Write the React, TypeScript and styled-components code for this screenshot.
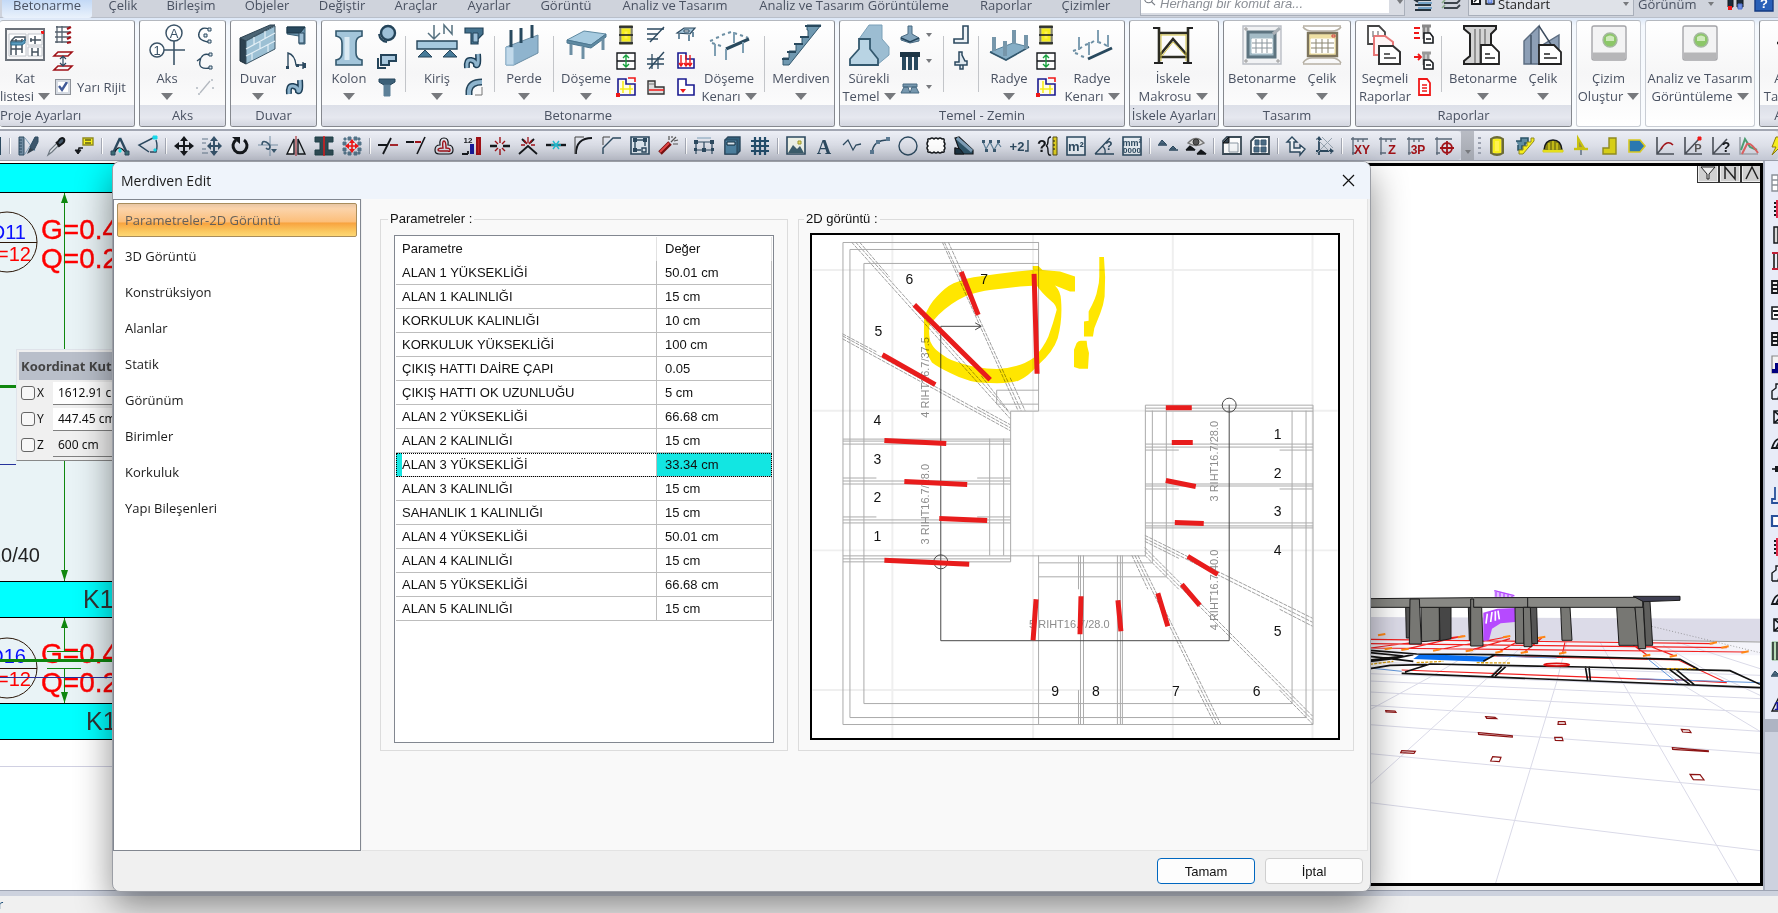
import React from 'react';
import styled, { createGlobalStyle } from 'styled-components';

const UI = '"Open Sans", "Noto Sans", sans-serif';
const SANS = '"Liberation Sans", Arial, sans-serif';

const Global = createGlobalStyle`
  *, *::before, *::after { box-sizing: border-box; }
  html, body { margin: 0; height: 100%; overflow: hidden; }
  body { font-family: ${UI}; font-size: 13px; color: #4a5262; }
  button, input, select { font: inherit; color: inherit; }
`;

/* ---------- icons ---------- */

type Label = { t: string; x: number; y: number; z: number; c?: string; serif?: boolean };
type Stroke = [d: string, stroke?: string, width?: number, fill?: string];
type Shape = Stroke | Label;

const INK = '#2d4a60';
const STEEL = '#7f9fb8';
const RED = '#a01218';
const HOT = '#f01818';
const YEL = '#f6ee1c';
const BLK = '#15181c';
const BLUE = '#1b1b90';

const glyphs: Record<string, Shape[]> = {
  frame: [['M2 2H18V18H2Z', INK, 2, 'none']],
  scalePen: [['M1 1V19H6V1ZM1 4H4M1 7H4M1 10H4M1 13H4M1 16H4', INK, 1, '#6f8aa0'], ['M7 2L17 15M7 18L17 2', STEEL, 1], ['M9 18L12 11L16 14Z', BLK, 0, '#33424e'], ['M12 11L17 1H20V6L16 14Z', INK, 1, '#3d566c']],
  dropper: [['M2 19L4 14L11 7L13 9L6 16Z', '#6d7780', 1.2, '#dfe3e8'], ['M10 6L14 10M11 7L14 3Q17 1 18 3T17 7L13 10Z', BLK, 2, '#44586a']],
  callout: [['M9 2H19V9H9Z', '#8f8a20', 1.4, YEL], ['M11 4H17M11 7H17', BLK, 1], ['M9 12H5L4 16', BLK, 1.4], ['M1 14H7L4 18Z', BLK, 1, BLK]],
  compass: [['M10 2L3 17M10 2L17 17', INK, 2.4], ['M5 16Q7 11 10 12T15 16', BLK, 1.2], ['M9 13H11V16H9Z', '#17e3ea', 1, '#17e3ea'], ['M1 15H5V19H1ZM15 15H19V19H15Z', INK, 1, '#3c6f77']],
  poly: [['M15 2L1 9L11 16', INK, 1.5], ['M18 4Q20 10 18 16H12', INK, 1.4], ['M15 0H19V3H15ZM16 13H18V15H16Z', '#17d8ea', 1, '#17d8ea']],
  move: [['M10 2V18M2 10H18', BLK, 2], ['M10 0L6 5H14ZM10 20L6 15H14ZM0 10L5 6V14ZM20 10L15 6V14Z', BLK, 0, BLK]],
  moveCopy: [['M12 3V17M6 10H19', '#36536b', 2], ['M12 0L8 5H16ZM12 20L8 15H16ZM20 10L16 6V14ZM5 10L9 6V14Z', '#36536b', 0, '#36536b'], ['M0 3H6M0 7H4M0 13H4M0 17H6', '#64798c', 1.2]],
  rotate: [['M6 4A7 7 0 1 0 14 4', BLK, 3], ['M2 1H10V8Z', BLK, 0, BLK]],
  swirl: [['M0 9H20M12 0V20', '#7891a6', 1], ['M4 9Q4 4 8 6T12 11Q11 15 8 12', '#3a586e', 1.6], ['M13 13H19L16 17Z', '#3a586e', 0, '#3a586e']],
  mirror: [['M8 3L1 18H8Z', BLK, 1.4, '#fff'], ['M12 3L19 18H12Z', BLK, 1.4, '#cfd8df'], ['M10 0V20', RED, 1]],
  ibeam: [['M1 1H19V6H14V14H19V19H1V14H6V6H1Z', '#204048', 1, '#2f4c55'], ['M10 0V20', HOT, 1.4]],
  explode: [['M6 1H9V4H6ZM12 1H15V4H12ZM1 6H4V9H1ZM16 6H19V9H16ZM1 12H4V15H1ZM16 12H19V15H16ZM6 16H9V19H6ZM12 16H15V19H12ZM2 2H4V4H2ZM16 16H18V18H16ZM16 2H18V4H16ZM2 16H4V18H2Z', '#54748a', 1, '#54748a'], ['M10 4V16M4 10H16', HOT, 1.6], ['M10 3L7 7H13ZM10 17L7 13H13ZM3 10L7 7V13ZM17 10L13 7V13Z', HOT, 0, HOT]],
  trim: [['M0 9H10M13 2L5 18', BLK, 1.8], ['M12 9H20', RED, 1.8]],
  extend: [['M0 6H8', BLK, 2], ['M9 6H15', RED, 2], ['M19 1L11 18', BLK, 1.6]],
  offset: [['M1 14Q1 9 6 9Q5 2 10 2T14 9Q19 9 19 14Q19 18 15 18H5Q1 18 1 14Z', BLK, 1.2], ['M4 14Q4 12 9 12Q8 5 10 5T12 12Q16 12 16 14T14 15H6Q4 15 4 14Z', RED, 1.4]],
  bars: [{ t: '12', x: 6, y: 7, z: 8, c: BLK }, ['M0 18H6M6 15V18', BLK, 1.8], ['M8 8H12V18H8Z', '#1a1a9a', 0, '#1a1a9a'], ['M15 2H18V18H15Z', RED, 2, '#c62626']],
  brk: [['M0 10H7M13 10H20', BLK, 2.4], ['M10 1V7M10 13V19M5 5L8 8M15 5L12 8M5 15L8 12M15 15L12 12', RED, 1.4]],
  xbrk: [['M1 18L10 10L19 18M4 3L8 7M16 3L12 7', BLK, 1.8], ['M10 1V7M3 9H7M17 9H13M6 4L9 8M14 4L11 8', RED, 1.3]],
  join: [['M0 9H20', BLK, 2.4], ['M7 5L13 13M13 5L7 13M5 9H15', '#22bcd0', 1.4]],
  fillet: [['M2 18Q2 2 18 2', BLK, 1.8], ['M1 18V1H10', '#444', 1]],
  chamfer: [['M1 18V12L11 2H19', INK, 1.4], ['M1 9V1H8', '#444', 1]],
  scaleRect: [['M1 1H19V18H1Z', INK, 1.6, '#dce6ee'], ['M5 4H15M5 4V14M15 4V10M5 14H11', INK, 1.4], ['M12 12H16V16H12Z', INK, 1.4], ['M3 2H7V6H3ZM13 2H17V6H13ZM3 12H7V16H3Z', INK, 0, INK]],
  wand: [['M2 17L12 7', '#7a1010', 5], ['M2 16L11 7', '#e84848', 2], ['M13 6L18 1M11 4L11 0M15 8H20M14 2L14 0M16 5L20 4', '#555', 1.2]],
  nodes: [['M2 6H18M2 6V18M10 6V14M18 6V18M2 14H18', INK, 1.2], ['M0 4H4V8H0ZM16 4H20V8H16ZM8 12H12V16H8ZM0 12H3V15H0ZM17 12H20V15H17Z', INK, 0, INK], ['M3 2H17', STEEL, 1]],
  book: [['M3 4L6 1H18V15L15 18H3Z', INK, 1.4, '#33617c'], ['M3 4H15V18H3Z', INK, 1.2, '#4f83a2'], ['M5 6H13V9H5Z', '#0f2b3c', 1, '#dfeaf2']],
  grid: [['M5 1V19M10 1V19M15 1V19M1 5H19M1 10H19M1 15H19', '#234d6b', 2.2]],
  image: [['M1 1H19V18H1Z', INK, 1.6, '#eef2e8'], ['M2 17L7 9L11 13L14 10L18 17Z', INK, 0, '#3e5f6e'], ['M12 5h3v3h-3Z', '#a09a30', 1, '#e8e070']],
  textA: [{ t: 'A', x: 10, y: 18, z: 20, c: INK, serif: true }],
  zigzag: [['M1 9L6 4L11 14L14 9L19 8', INK, 1.3]],
  arc: [['M2 17Q3 4 18 4', INK, 1.4], ['M0 14H4V18H0ZM6 4H10V8H6ZM16 1H20V5H16Z', INK, 0, '#5c7b94']],
  circle: [['M10 10m-9 0a9 9 0 1 0 18 0a9 9 0 1 0 -18 0', INK, 1.4]],
  cloud: [['M2 5Q1 2 4 3Q6 1 8 3Q10 1 12 3Q14 1 16 3Q19 2 18 6Q20 8 18 10Q20 12 18 14Q19 17 16 16Q14 18 12 16Q10 18 8 16Q6 18 4 16Q1 17 2 14Q0 12 2 10Q0 8 2 5Z', BLK, 1.5, '#fff']],
  tri: [['M1 2L5 1L19 14V18H1V12L5 13Z', BLK, 1.2, '#2f5468'], ['M3 2L18 15', STEEL, 3], ['M1 12V18H10L6 13Z', BLK, 1, '#1d3442']],
  wave: [['M1 6L4 13L8 6L12 14L16 7L19 11', '#5f8199', 1.2], ['M0 4H3V7H0ZM7 4H10V7H7ZM15 4H18V7H15ZM3 13H6V16H3ZM11 13H14V16H11Z', INK, 0, '#3c5b72']],
  plus21: [{ t: '+2', x: 7, y: 15, z: 13, c: INK }, ['M15 15H18V4', INK, 1.4]],
  qscale: [{ t: '?', x: 4, y: 16, z: 16, c: BLK }, ['M13 1Q10 1 10 5T8 10Q10 10 10 15T13 19', BLK, 1.4], ['M15 1H19V19H15Z', '#56501a', 1, '#e0d020'], ['M15 5H17M15 9H17M15 13H17', BLK, 1]],
  m2: [['M1 1H19V19H1Z', INK, 1.6, '#e7edf3'], { t: 'm²', x: 10, y: 15, z: 13, c: INK }],
  angle: [['M1 18L16 2M1 18H20M8 10Q12 12 11 18', INK, 1.3], { t: '?', x: 15, y: 14, z: 12, c: INK }],
  mm2: [['M1 1H19V19H1Z', INK, 1.6, '#e7edf3'], { t: 'mm²', x: 10, y: 10, z: 9, c: INK }, { t: '0000', x: 10, y: 17, z: 8, c: INK }],
  levels: [['M0 9H9M11 14H20', INK, 1.6], ['M4 4L1 8H8ZM12 13H18L15 10Z', INK, 1, '#4d6a80']],
  eye: [['M2 7Q10 -2 18 7Q10 12 2 7Z', '#777', 1.4, '#ddd'], ['M10 6m-3 0a3 3 0 1 0 6 0a3 3 0 1 0 -6 0', '#333', 1, '#555'], ['M0 14H9M11 18H20M4 10L1 13H8ZM15 14L12 17H19Z', BLK, 1.3, BLK]],
  corner: [['M1 5L5 1H19V18H1Z', '#3c4c58', 1.8, '#fff'], ['M1 7L7 1V7Z', '#111', 1, '#33424e'], ['M7 7H16V16H7Z', '#8d99a4', 1, '#f7f9fb']],
  panels: [['M1 5L5 1H19V18H1Z', '#3c4c58', 1.8, '#fff'], ['M5 4H9V9H5ZM11 4H16V9H11ZM4 11H9V16H4ZM11 11H16V16H11Z', '#3c5b72', 1, '#4b6d86']],
  turn: [['M6 1L1 6H4V16H14V19L19 13L14 9V12H8V6H11Z', INK, 1.4, '#f2f5f8']],
  hatch: [['M5 19V2M2 15H18', INK, 1.8], ['M5 0L2 4H8ZM20 15L16 12V18Z', INK, 0, INK], ['M2 2L18 18M18 2L2 18M8 1L19 12', '#9aa6b2', 1]],
  xy: [['M1 3H18M3 1V19M2 17H5M8 3V6M13 3V6', '#5a6878', 1.3], { t: 'XY', x: 12, y: 18, z: 12, c: RED }],
  z: [['M1 3H18M3 1V19M2 17H8M8 3V6M13 3V6', '#5a6878', 1.3], { t: 'Z', x: 14, y: 18, z: 13, c: RED }],
  p3: [['M1 3H18M3 1V19M2 17H5M8 3V6M13 3V6', '#5a6878', 1.3], { t: '3P', x: 12, y: 18, z: 12, c: RED }],
  target: [['M1 3H18M3 1V19M2 17H6', '#5a6878', 1.3], ['M13 12m-5 0a5 5 0 1 0 10 0a5 5 0 1 0 -10 0M13 5V19M6 12H20', RED, 1.8]],
  ycol: [['M4 3Q10 -1 16 3V17Q10 21 4 17Z', '#6b6b35', 2, '#a6a04a'], ['M7 4H13V16H7Z', YEL, 2, '#fff250']],
  ystair: [['M1 5H6V2H13V7H10V10H7V14H3V9', '#2b5468', 1.6, '#5f8ba0'], ['M4 18V14H8V10H12V6H16V2H19V5L8 18Z', '#8f8a20', 1, YEL]],
  ydome: [['M1 14Q2 4 10 4T19 14Z', BLK, 1.5, '#8a8412'], ['M6 14V7M10 14V5M14 14V7', YEL, 1], ['M0 14H20V16H0Z', '#d6d018', 1, YEL]],
  ypile: [['M7 12V2L13 12Z', '#c9c210', 2, '#9a9440'], ['M3 13H17', '#c9c210', 2.4], ['M10 14V19', '#7b8896', 2]],
  yl: [['M10 2H17V18H4V12H10Z', '#8f8a20', 1.4, '#d6ce18']],
  ytag: [['M2 4H13L18 10L13 16H2Z', '#d8c820', 1.6, '#2a78b0']],
  axes: [['M2 1V18H19M2 18L7 12', '#4a4f58', 1.6], ['M6 13Q12 3 18 9', RED, 1.6]],
  axesP: [['M2 1V18H19M2 18L16 3', '#4a4f58', 1.6], ['M15 1H18V4H15Z', HOT, 1, HOT], { t: 'P', x: 15, y: 16, z: 11, c: '#555' }],
  axesQ: [['M2 1V18H19M2 18L16 3', '#4a4f58', 1.6], { t: '?', x: 15, y: 16, z: 14, c: BLK }],
  curve: [['M1 1V18H19', '#9aa0a8', 1.6], ['M2 14L6 3L11 11L18 14', '#4c9c70', 2], ['M3 18L8 8Q12 6 19 17', '#d86060', 2]],
  bolt: [['M9 1H17L12 8H16L5 19L9 11H5Z', '#8a7a10', 1, YEL]],
  lens: [['M7 6m-5 0a5 5 0 1 0 10 0a5 5 0 1 0 -10 0M11 10L15 14', '#777c84', 1.4]],
  floors: [['M3 2H17M2 7H17M2 12H17M2 17H17M4 1V18M9 1V18', '#54606c', 1.3], ['M14 4L18 2M14 9L18 7M14 14L18 12M14 18L18 17', RED, 2]],
  storey: [['M5 1H19L15 5H1ZM5 15H19L15 19H1Z', RED, 1.6], ['M10 5V15M7 8L10 5L13 8M7 12L10 15L13 12', INK, 1.2]],
  arcAxis: [['M14 4Q6 1 4 8T13 17', INK, 1.4], ['M13 3h3v3h-3ZM13 15h3v3h-3ZM9 9h3v3h-3Z', INK, 1, '#dce6ee']],
  arcAxis2: [['M15 4Q7 1 5 10T15 17M2 10L6 7', INK, 1.4], ['M14 2h3v3h-3ZM14 15h3v3h-3Z', INK, 1, '#dce6ee']],
  dashLine: [['M5 16L15 4', '#b3b8bf', 1.3], ['M1 10h2v2h-2ZM16 2h2v2h-2ZM3 16h2v2h-2ZM17 10h2v2h-2Z', '#c3c8ce', 0, '#c3c8ce']],
  wallCut: [['M1 2H19V19H13V11L1 9Z', '#3b6076', 1, '#6e97b0'], ['M1 2H19L14 8H1Z', '#1d3646', 1, '#28495e'], ['M13 8H18V18H13Z', INK, 1, '#9fc0d6']],
  doorArc: [['M2 17V2Q9 4 10 14H18M17 11V18', INK, 1.4], ['M0 15h3v3h-3ZM10 13h3v3h-3ZM17 12h3v5h-3Z', INK, 0, INK]],
  pipe: [['M3 17Q2 8 7 9T12 14Q15 16 14 3', '#1d3f57', 6], ['M3 17Q2 8 7 9T12 14Q15 16 14 3', '#8eb4cd', 3]],
  round: [['M11 8m-7 0a7 7 0 1 0 14 0a7 7 0 1 0 -14 0', '#24445a', 2.4, '#9dc0d8'], ['M2 9Q3 16 10 17', '#24445a', 2]],
  lshape: [['M4 4H19V10H12V14H4Z', '#24445a', 2, '#a8c8de'], ['M1 7V17H9', '#24445a', 2]],
  plug: [['M2 2H18V5L13 8H7L2 5Z', '#24445a', 1, '#3c6078'], ['M7 8H13V19H7Z', '#5d8098', 1, '#5d8098']],
  beamL: [['M1 3H19V9L14 14V19H7V8H1Z', '#24445a', 1.2, '#44728e'], ['M9 8H14V17H9Z', '#24445a', 1, '#9dc0d8']],
  arcBeam: [['M5 18V14Q6 5 18 5', '#24445a', 7], ['M5 18V14Q6 5 18 5', '#8eb4cd', 4], ['M11 18H18V10', '#777', 1]],
  ycolumn: [['M4 1H16V19H4Z', '#7a7a60', 1.4, '#a5a58e'], ['M7 5H13V15H7Z', YEL, 3, '#fff250'], ['M3 10H17M3 2H17M3 18H17', BLK, 1.4]],
  vArrow: [['M1 2H19V18H1ZM1 10H19', BLK, 1.4, '#fdfdfd'], ['M10 4V16M7 7L10 4L13 7M7 13L10 16L13 13', '#14a23c', 1.4]],
  yellowPlan: [['M2 2H10V7H19V18H2Z', BLUE, 1.6, '#fffde8'], ['M4 12H17M7 4V16M14 8V17', YEL, 1.6], ['M12 1H19V5', HOT, 1.6], ['M0 16h4v4h-4Z', HOT, 0, HOT]],
  lines: [['M1 4H18M1 9H12M1 14H12', INK, 1.4], ['M18 2L4 17', INK, 1.4]],
  mesh: [['M1 8H18M1 13H18M6 3V18M12 6V18', INK, 1.3], ['M18 1L3 18', INK, 1.4]],
  steps: [['M2 4H9V10H18V17H2Z', '#333', 1.4, '#ddd'], ['M3 13H18', HOT, 1.4], ['M3 7H8', '#777', 1]],
  slabHole: [['M1 8L8 3H19L14 9Z', INK, 1.2, '#a6c5d9'], ['M8 5H13V7H8Z', INK, 1, '#fff'], ['M3 9V14M13 10V16M17 7V12', '#5d7f96', 1.8]],
  load: [['M2 2H10V8H18V17H2Z', BLUE, 1.6, '#fff'], ['M5 4V14M10 4V14M14 4V14M3 12L5 15L7 12M8 12L10 15L12 12M12 12L14 15L16 12', HOT, 1.4]],
  load2: [['M2 2H10V8H18V18H2Z', BLUE, 1.6, '#fff'], ['M4 12H10L7 16Z', HOT, 0, HOT]],
  footing: [['M8 1H12V9L19 13V16L10 18L1 15V12L8 9Z', '#496a82', 1, '#82a4bc'], ['M1 13L10 17L19 13', '#24445a', 1.5]],
  piles: [['M0 1H20V6H0Z', '#1d3646', 0, '#1d3646'], ['M4 6V19M10 6V19M16 6V19', '#28495e', 4]],
  foot2: [['M3 7H17V10H3ZM4 10H8L10 16H1ZM12 10H16L19 16H10Z', '#496a82', 1, '#7697ae']],
  retain: [['M12 1H17V18H3V14H12Z', INK, 1.6, '#eef3f7']],
  retain2: [['M8 1H11V4L14 10H16V14H4V11H8ZM9 14V18H12V14', INK, 1.5, '#dfe8ef']],
  doc: [['M5 2H13L16 6V18H5Z', HOT, 1.8, '#fff'], ['M8 8H13M8 11H13M8 14H13', HOT, 1.3]],
  docCol: [['M8 1H17M10 1V14M14 1V8', '#888', 3], ['M10 8H16L19 12V18H10Z', BLK, 1.6, '#fff'], ['M12 14H17', BLK, 1.4], ['M0 3H6M0 8H5M0 13H6', HOT, 2]],
  docCol2: [['M8 2H17M10 2V14M14 1V8', '#999', 3], ['M10 9H16L19 12V18H10Z', BLK, 1.6, '#fff'], ['M12 14H17', BLK, 1.4], ['M0 6H6M4 3L7 6L4 9', HOT, 1.8]],
  layers: [['M2 4H18M2 9H18M2 14H18M5 1L2 4L5 6', '#26323c', 1.8], ['M5 7H19M5 12H19', '#5a94c0', 1.6]],
  layers2: [['M6 2H19M3 7H16L19 4M3 12H16L19 9', '#3c444c', 1.8], ['M1 7L4 4M1 12L4 9', '#8a8', 1.6]],
  styles: [['M1 0H9V8H1Z', BLK, 2, '#fff'], ['M3 6L7 2', BLK, 1.4], ['M15 0H23V8H15Z', BLK, 1.4, '#fff'], ['M17 2H21V7H17Z', '#4a70d8', 1, '#9ab4f0']],
  people: [['M2 1H7V11H2ZM11 1H17V11H11Z', BLK, 1, '#1b2a3a'], ['M2 10H6V14H2Z', HOT, 0, HOT], ['M12 8H16V13H12Z', '#5070d0', 1, '#7090e0']],
  help: [['M1 0H19V15H1Z', '#143a80', 1.4, '#2860b8'], { t: '?', x: 10, y: 12, z: 13, c: '#fff' }],
  sGrid: [['M1 2H19V18H1ZM1 7H19M1 12H19M7 2V18', '#8a9098', 1.4, '#fff']],
  sBeam: [['M3 4H18V8H3M3 12H18V16H3', BLK, 1.8], ['M6 1V19', '#e02848', 2]],
  sCol: [['M3 2H17V18H3ZM7 2V18', BLK, 1.5, '#d8d8d8']],
  sRed: [['M1 2H19M1 18H19', '#c02038', 2], ['M3 3V17M7 3V17', '#444', 2]],
  sDark: [['M1 4H19V16H1Z', BLK, 1.6, '#fff'], ['M2 8H19M3 12H19', BLK, 2.2]],
  sTab: [['M1 4H19V16H1ZM1 8H19M1 12H19M7 4V16', BLK, 1.8, '#eee']],
  sPlan: [['M1 1H19V18H1Z', '#888', 1.2, '#f4f4f4'], ['M4 8V14H1V18H19V14H10V8Z', '#000080', 0, '#000080']],
  sMount: [['M1 18L1 10L5 7V3H14M1 18H19M7 18L9 10', BLK, 1.4]],
  sX: [['M3 4H17V16H3ZM3 4L17 16M17 4L3 16', BLK, 1.6]],
  sHill: [['M1 15Q4 6 8 6T19 15ZM5 15L8 9', BLK, 1.8]],
  sDot: [['M1 10H19', BLK, 1.6], ['M4 7h5v6h-5Z', BLK, 0, BLK]],
  sPile: [['M4 2V14H1V18H19M8 2V14', '#27509a', 1.8]],
  sBlue: [['M1 5H19V15H1Z', '#27509a', 2.2, '#fff']],
  sGreen: [['M1 1H19V19H1Z', '#86b886', 1, '#b8dcb8'], ['M2 1V19M6 1V19', BLK, 1.4]],
  sNum: [['M1 18L9 2L17 18Z', BLK, 1.4], { t: '1', x: 6, y: 17, z: 11, c: '#1414a0' }],
  Kat: [['M1 4H39V35H1Z', '#6d737b', 2, '#f6f6f7'], ['M36 6h3v3h-3Z', HOT, 0, HOT], ['M4 9H21V31H4ZM23 9H37V20H23ZM23 22H37V31H23Z', '#c0c4ca', 1, '#fff'], ['M6 16H17M6 24H17M6 16V30M11 14V30M17 14V28M6 16L10 12H20V16M25 15H36M30 11V19M26 13V17M27 23V31M33 23V31M27 27H33', '#44525e', 1.5], ['M6 17H17L20 14V18L17 20H6Z', '#33708f', 1, '#5a9cc0']],
  Aks: [['M27 8m-8 0a8 8 0 1 0 16 0a8 8 0 1 0 -16 0M10 25m-7 0a7 7 0 1 0 14 0a7 7 0 1 0 -14 0', '#3c5468', 1.5, '#fff'], ['M27 16V40M17 25H38', '#3c5468', 1.6], { t: 'A', x: 27, y: 13, z: 13, c: '#3c5468' }, { t: '1', x: 10, y: 30, z: 13, c: '#3c5468' }],
  Duvar: [['M2 13L8 16V39L2 36Z', '#1b2c38', 1, '#2c4150'], ['M2 13L32 0H37L8 16Z', '#2c4150', 1, '#4b6474'], ['M8 16L37 1V24L8 39Z', '#3d5666', 1, '#9cc0d4'], ['M8 24L37 8M8 31L37 16M16 12V20M27 6V14M22 17V24M14 28V35M30 19V27', '#e3eff6', 1.2]],
  Kolon: [['M7 6H33V11Q27 12 27 18V28Q27 34 33 35V40H7V35Q13 34 13 28V18Q13 12 7 11Z', '#33586e', 1.6, '#a3c5da'], ['M18 12V35', '#dcebf4', 5]],
  Kiris: [['M0 16H40V24H0Z', '#24445a', 1.4, '#a6c9df'], ['M8 25L1 32H15ZM33 25L26 32H40Z', '#24445a', 1, '#467a98'], ['M17 0V14M11 8L17 14L23 8M27 9V0L35 9V0', '#55707f', 1.5]],
  Perde: [['M2 22L34 10V28L10 40H2Z', '#6a8da4', 1, '#8fb4ce'], ['M2 22H10V40H2Z', '#8fb4ce', 1, '#c1d9ea'], ['M7 22V5M17 18V3M28 13V0', '#28495e', 3]],
  Doseme: [['M1 15L18 6L40 9L25 20Z', '#5f8aa2', 1, '#a7cbe0'], ['M1 15V18L25 23L40 12V9L25 20Z', '#4c7690', 1, '#5f8aa2'], ['M5 19V30M17 22V34M37 14V25', '#6d8fa4', 3]],
  DKenar: [['M1 16L4 15M7 13L10 12M13 10L16 9M19 8L22 7M25 8L28 9M31 10L34 11M37 12L39 13M3 18L6 19M9 20L12 21', '#6d8fa4', 2], ['M17 24L40 14', '#28495e', 3], ['M6 19V31M17 24V35M34 17V28M25 7V18', '#7f9fb3', 2]],
  Merdiven: [['M26 0H40L8 40H2V33H8V26H15V19H21V12H27V5H26Z', '#33586e', 1, '#6f98b0'], ['M24 1H40M19 12H28M13 19H22M6 27H15M1 34H8', '#28495e', 2.2]],
  Surekli: [['M10 14L20 0H33V14L40 22V30L28 40', '#7ba0b8', 1, '#9cbdd2'], ['M10 14H21V24L29 34V40H1V34L10 24Z', '#33586e', 1.8, '#b9d4e4']],
  Radye: [['M1 27L24 18L40 22L17 35Z', '#55809a', 1, '#86aec6'], ['M1 27L17 35L40 22', '#33586e', 1.6], ['M5 26V12M16 31V16M25 19V5M37 24V10', '#7696aa', 4]],
  RKenar: [['M16 34L40 23', '#28495e', 3], ['M1 26L4 25M7 24L10 22M13 20L16 19M19 18L22 16M26 17L29 18M32 19L35 21M3 28L6 29M9 31L12 32', '#6d8fa4', 2], ['M7 25V12M17 30V17M26 18V5M36 22V10', '#7f9fb3', 2]],
  Iskele: [['M6 2V38M35 2V38M6 8H35M6 32H35M7 30L20 14L34 30', '#2c2c22', 2.6], ['M8 9V36M33 9V36M9 31L20 17L32 30M8 10H33', '#d2c242', 1], ['M0 3H6M35 3H40M1 38H10M30 38H39', '#222', 2]],
  Tas: [['M1 1H39V39H1Z', '#b9bdc4', 1.4, '#f1f2f4'], ['M6 7H33V32H6Z', '#5d7480', 3, '#a3bbc6'], ['M10 14H30V28H10Z', '#fff', 1, '#fff'], ['M10 18H30M10 23H30M14 14V28M20 14V28M25 14V28', '#8a959c', 1], ['M3 3h2v2h-2ZM3 35h2v2h-2ZM35 35h2v2h-2Z', '#999', 1], ['M31 9L38 3', '#a9b0b6', 3]],
  TasC: [['M1 2Q4 6 10 6H30Q36 6 39 2M1 38Q4 33 10 33H30Q36 33 39 38M1 1H39M1 39H39', '#b6b0a4', 1.6], ['M6 8H35V31H6Z', '#7d745c', 2.4, '#efe0a4'], ['M9 14H32V28H9Z', '#fff', 1, '#fff'], ['M9 18H32M9 23H32M14 14V28M20 14V28M26 14V28', '#8a8570', 1], ['M30 10h3v2h-3Z', '#d04040', 1]],
  Secmeli: [['M3 1H14L20 7V19H3Z', '#444', 1.8, '#fff'], ['M9 11H20L28 17V30H9Z', '#e87878', 2, '#fff6f6'], ['M14 21H28L35 27V39H14Z', '#333', 2, '#fff'], ['M19 29H25M19 33H31', '#333', 1.6], ['M8 6V12M13 6V10', '#888', 1.4]],
  RapB: [['M1 1H33V4L28 9V31L33 36V39H1V36L7 31V9L1 4Z', '#222', 2, '#d4d4d4'], ['M12 4V38M17 4V38M22 4V38', '#777', 1.4], ['M18 20H29L36 27V39H18Z', '#222', 1.8, '#fff'], ['M22 29H27M22 33H32', '#222', 1.6]],
  RapC: [['M1 16L16 1V22L36 10V39H1Z', '#5b6c80', 1.4, '#8d9fb6'], ['M8 10V39M16 1L31 24', '#3d4c5e', 1.4], ['M16 20H31L38 27V39H16Z', '#222', 1.8, '#fff'], ['M21 29H27M21 33H34', '#222', 1.6]],
  Led: [['M5 1H35Q37 1 37 3V33Q37 35 35 35H5Q3 35 3 33V3Q3 1 5 1Z', '#a4a4a8', 1.4, '#f3f3f4'], ['M4 28H36V34H4Z', '#b6b6b8', 1, '#b6b6b8'], ['M21 15m-7 0a7 7 0 1 0 14 0a7 7 0 1 0 -14 0', '#a5b8a0', 1.4, '#8cc768'], ['M17 12Q21 9 25 12V16H17Z', '#d9f0cc', 0, '#cfeabc']],
  Son: [['M9 18H32M14 38L20 24L28 38', '#222', 2.4]],
};

const Svg = styled.svg`
  display: block;
  flex: none;
  overflow: visible;
`;

function Icon({ name, size = 20 }: { name: string; size?: number }) {
  const box = size === 40 ? 40 : 20;
  return (
    <Svg width={size} height={size} viewBox={`0 0 ${box} ${box}`} aria-hidden="true">
      {glyphs[name].map((s, i) =>
        Array.isArray(s) ? (
          <path key={i} d={s[0]} stroke={s[1] ?? INK} strokeWidth={s[2] ?? 1.5} fill={s[3] ?? 'none'} />
        ) : (
          <text key={i} x={s.x} y={s.y} fontSize={s.z} fill={s.c} fontWeight={box === 40 ? 400 : 700}
            textAnchor="middle" fontFamily={s.serif ? '"Liberation Serif", serif' : SANS}>{s.t}</text>
        ),
      )}
    </Svg>
  );
}

/* ---------- application frame ---------- */

const Shell = styled.div`
  position: relative;
  display: flex;
  flex-direction: column;
  height: 100vh;
  overflow: hidden;
  background: #f0f0f0;
`;

const TabBar = styled.nav`
  display: flex;
  height: 18px;
  padding-left: 2px;
  background: #cfd3dc;
  border-bottom: 1px solid #b9bfca;
  white-space: nowrap;
`;

const Tab = styled.button<{ $w: number; $active?: boolean }>`
  width: ${p => p.$w}px;
  height: 18px;
  flex: none;
  padding: 0 0 8px;
  border: 0;
  border-radius: 0 0 3px 3px;
  line-height: 10px;
  background: ${p => (p.$active ? 'linear-gradient(#c3d9f6, #eaf2fc)' : 'none')};
`;

const Search = styled.div`
  position: relative;
  display: flex;
  width: 265px;
  margin-left: 14px;
  height: 16px;
  border: solid #a9afba;
  border-width: 0 1px 1px;
  background: #d9dce3;
  align-items: flex-start;
  gap: 8px;
  > svg { position: absolute; left: 2px; top: -6px; }
  input {
    width: 248px;
    height: 13px;
    padding: 0 0 7px 19px;
    border: 0;
    background: #fff;
    font: italic 13px/10px ${SANS};
    outline: 0;
    &::placeholder { color: #8b8f96; }
  }
`;

const QuickBar = styled.div`
  display: flex;
  flex: 1;
  height: 17px;
  padding-left: 4px;
  align-items: flex-start;
  overflow: hidden;
  > svg { margin: -4px 4px 0; }
`;

const StyleBox = styled.div`
  position: relative;
  width: 166px;
  height: 16px;
  margin: 0 4px 0 3px;
  > svg { position: absolute; left: 3px; top: -4px; }
  > i { position: absolute; right: 5px; top: 2px; }
`;

const StyleSelect = styled.select`
  display: block;
  width: 100%;
  height: 24px;
  margin-top: -8px;
  padding: 0 0 0 29px;
  border: solid #a9afba;
  border-width: 0 1px 1px;
  color: #222;
  appearance: none;
  background: #dfe2e8;
`;

const ViewButton = styled.button`
  display: flex;
  gap: 11px;
  width: 84px;
  height: 16px;
  padding: 0;
  border: 0;
  background: none;
  line-height: 8px;
  i { margin-top: 2px; }
`;

const Ribbon = styled.div`
  display: flex;
  gap: 4px;
  height: 111px;
  padding-top: 2px;
  background: linear-gradient(#dde8f8, #f4f8fd 8px, #fafcfe);
  overflow: hidden;
`;

const Group = styled.section<{ $w: number; $first?: boolean; $plain?: boolean }>`
  display: flex;
  flex-direction: column;
  flex: none;
  width: ${p => p.$w}px;
  height: 107px;
  border: 1px solid ${p => (p.$plain ? '#c9cdd4' : '#85888e')};
  border-left-width: ${p => (p.$first ? 0 : 1)}px;
  border-top-color: #b4b8bf;
  border-radius: 3px;
  background: linear-gradient(#fff, #f6f6f7 50%, #fff);
  overflow: hidden;
`;

const GroupBody = styled.div`
  display: flex;
  height: 84px;
  padding-top: 4px;
`;

const Caption = styled.div<{ $left?: boolean }>`
  flex: 1;
  line-height: 21px;
  text-align: ${p => (p.$left ? 'left' : 'center')};
  background: linear-gradient(#dcdfe8, #e6e8ef 60%, #d3d6e0);
  white-space: nowrap;
`;

const Big = styled.button<{ $w: number }>`
  display: flex;
  flex-direction: column;
  align-items: center;
  gap: 4px;
  flex: none;
  width: ${p => p.$w}px;
  padding: 0;
  border: 0;
  background: none;
  line-height: 18px;
  white-space: nowrap;
`;

const BigText = styled.span`
  display: flex;
  flex-direction: column;
  align-items: center;
`;

const Line = styled.span`
  display: flex;
  align-items: center;
  gap: 4px;
  height: 18px;
`;

const Arrow = styled.i<{ $small?: boolean }>`
  width: 0;
  height: 0;
  border: solid transparent;
  border-width: ${p => (p.$small ? '4px 3px 0' : '7px 6px 0')};
  border-top-color: #77797d;
`;

const Stack = styled.div<{ $w: number }>`
  display: flex;
  flex-direction: column;
  align-items: center;
  gap: 6px;
  flex: none;
  width: ${p => p.$w}px;
`;

const Small = styled.button`
  display: grid;
  place-items: center;
  width: 20px;
  height: 20px;
  padding: 0;
  border: 0;
  background: none;
`;

const Divider = styled.span`
  width: 1px;
  height: 56px;
  margin: 11px 7px 0;
  background: #c3c5c9;
`;

const RigidCheck = styled.label`
  display: flex;
  align-items: center;
  align-self: flex-start;
  gap: 6px;
  height: 20px;
  padding-left: 5px;
  white-space: nowrap;
  input {
    appearance: none;
    width: 16px;
    height: 16px;
    margin: 0;
    border: 1px solid #8d9198;
    background: #fff url("data:image/svg+xml,%3Csvg xmlns='http://www.w3.org/2000/svg' viewBox='0 0 14 14'%3E%3Cpath d='M3 6L6 10L11 2' fill='none' stroke='%23405a98' stroke-width='2.4'/%3E%3C/svg%3E");
    box-shadow: inset 0 0 0 2px #d5dae2;
  }
`;

function BigButton({ w, icon, label, second, arrow = true }: { w: number; icon: string; label: string; second?: string; arrow?: boolean }) {
  return (
    <Big $w={w}>
      <Icon name={icon} size={40} />
      <BigText>
        <Line>{label}</Line>
        <Line>{second}{arrow && <Arrow />}</Line>
      </BigText>
    </Big>
  );
}

function Smalls({ w, names }: { w: number; names: string[] }) {
  return (
    <Stack $w={w}>
      {names.map(n => <Small key={n} aria-label={n}><Icon name={n} size={20} /></Small>)}
    </Stack>
  );
}

const ToolRow = styled.div`
  display: flex;
  height: 32px;
  flex: none;
  border-top: 2px solid #a2a6b2;
  border-bottom: 1px solid #9a9eaa;
  background: #d5d9e2;
  overflow: hidden;
`;

const ToolStrip = styled.div<{ $grow?: boolean }>`
  display: flex;
  align-items: center;
  flex: ${p => (p.$grow ? '1' : 'none')};
  min-width: 0;
  padding-right: 3px;
  border-radius: 0 4px 4px 0;
  background: linear-gradient(#eceef5, #dcdfe8 50%, #c3c7d3);
`;

const Tool = styled.button<{ $first?: boolean }>`
  display: grid;
  place-items: center;
  flex: none;
  width: 28px;
  height: 28px;
  margin-left: ${p => (p.$first ? '-22px' : 0)};
  padding: 0;
  border: 0;
  background: none;
`;

const ToolGap = styled.span`
  flex: none;
  width: 2px;
  height: 16px;
  margin: 0 3px;
  background: linear-gradient(90deg, #a5a9b5 50%, #fff 50%);
`;

const MoreTools = styled.button`
  display: flex;
  align-items: flex-end;
  justify-content: center;
  width: 13px;
  padding: 0 0 6px;
  border: 0;
  background: linear-gradient(#b9bcc4, #a3a7b0);
  flex: none;
`;

const Grip = styled.span`
  flex: none;
  width: 3px;
  height: 18px;
  margin: 0 2px 0 4px;
  background: repeating-linear-gradient(#9aa0ae 0 2px, transparent 2px 5px);
`;

/* ---------- workspace ---------- */

const Workspace = styled.main`
  display: flex;
  flex: 1;
  min-height: 0;
`;

const Plan = styled.div`
  position: relative;
  flex: 1;
  overflow: hidden;
  background: #fff;
`;

const CoordBox = styled.div`
  position: absolute;
  left: 16px;
  top: 188px;
  width: 160px;
  padding: 2px;
  border: 1px solid #dfe3ea;
  border-bottom-color: #888;
  background: #f0f0f0;
  font: 12px/16px "Noto Sans", sans-serif;
  color: #111;
  h2 {
    margin: 0;
    padding-left: 2px;
    font: bold 13px/28px "Noto Sans", sans-serif;
    color: #444;
    background: #b9bfca;
    white-space: nowrap;
  }
`;

const CoordRow = styled.div`
  display: flex;
  align-items: center;
  gap: 2px;
  height: 26px;
  padding-left: 2px;
  input[type='checkbox'] {
    appearance: none;
    width: 14px;
    height: 14px;
    margin: 0;
    border: 1px solid #666;
    border-radius: 3px;
    background: #f7f7f7;
  }
  label { width: 14px; }
  input[type='text'] {
    width: 110px;
    height: 23px;
    padding: 0 5px;
    border: 0;
    border-bottom: 1px solid #808080;
    background: #fff;
    &:read-only { background: #f0f0f0; }
  }
`;

const View3D = styled.div`
  position: relative;
  display: flex;
  justify-content: flex-end;
  width: 700px;
  margin: 2px 0 4px;
  border: 3px solid #000;
  background: #fff;
  overflow: hidden;
  > svg { height: 100%; width: 390px; }
`;

const ViewButtons = styled.div`
  position: absolute;
  top: -3px;
  right: -3px;
  display: flex;
  gap: 2px;
  padding: 1px;
  background: #333;
  button {
    display: grid;
    place-items: center;
    width: 20px;
    height: 18px;
    padding: 0;
    border: 1px solid #eee;
    background: #d0d0d0;
  }
`;

const SideBar = styled.aside`
  display: flex;
  flex-direction: column;
  flex: none;
  width: 15px;
  border-left: 2px solid #a8aebd;
  background: #cdd2df;
  overflow: hidden;
`;

const SideTools = styled.div`
  display: flex;
  flex-direction: column;
  gap: 6px;
  padding: 12px 0 6px 6px;
  background: #e8ecf8;
  border-bottom: 13px solid #aeb4c3;
`;

const StatusBar = styled.footer`
  height: 23px;
  flex: none;
  border-top: 1px solid #9da3b2;
  background: linear-gradient(#cdd2de 5px, #f0f0f0 5px);
  line-height: 26px;
  color: #1d4f7a;
  text-indent: -2px;
`;

/* ---------- dialog ---------- */

const Dialog = styled.div`
  position: absolute;
  left: 112px;
  right: 407px;
  top: 161px;
  bottom: 21px;
  display: flex;
  flex-direction: column;
  border: 1px solid #9b9ea5;
  border-radius: 8px;
  background: #f0f0f0;
  box-shadow: 0 14px 36px rgba(0, 0, 0, 0.45);
  overflow: hidden;
`;

const TitleBar = styled.header`
  display: flex;
  align-items: center;
  justify-content: space-between;
  height: 37px;
  padding: 0 15px 0 8px;
  background: #eff4fb;
  color: #1b1b1b;
  h1 { margin: 0; font-size: 14px; font-weight: 400; }
  button { padding: 0; border: 0; background: none; }
`;

const DialogBody = styled.div`
  display: flex;
  flex: 1;
  min-height: 0;
`;

const Pages = styled.ul`
  display: flex;
  flex-direction: column;
  gap: 2px;
  width: 248px;
  flex: none;
  margin: 0 1px 0 0;
  padding: 3px 3px 2px;
  list-style: none;
  border: 1px solid #828790;
  background: #fff;
`;

const PageButton = styled.button<{ $on?: boolean }>`
  display: block;
  width: 100%;
  height: 34px;
  padding: 0 0 0 7px;
  text-align: left;
  border: 1px solid ${p => (p.$on ? '#a98d5c' : 'transparent')};
  border-radius: 2px;
  color: ${p => (p.$on ? '#65605a' : '#1b1b1b')};
  background: ${p => (p.$on ? 'linear-gradient(#e8c6a4, #fbd3aa 15%, #fcbf7a 55%, #f8a440 60%, #fbc860 85%, #fdd774)' : 'none')};
`;

const Page = styled.div`
  display: flex;
  gap: 10px;
  flex: 1;
  min-width: 0;
  margin-right: 2px;
  padding: 12px 13px 99px 18px;
  border: solid #e3e3e3;
  border-width: 0 1px 1px 0;
  background: #f9f9f9;
  font: 13px/16px ${SANS};
  color: #111;
`;

const Box = styled.fieldset<{ $pad: string; $w?: number }>`
  flex: ${p => (p.$w ? 'none' : '1')};
  width: ${p => (p.$w ? `${p.$w}px` : 'auto')};
  min-width: 0;
  margin: 0;
  padding: ${p => p.$pad};
  border: 1px solid #dcdcdc;
  legend { margin-left: -6px; padding: 0 2px; }
`;

const TableBox = styled.div`
  height: 100%;
  padding: 1px;
  border: 1px solid #828790;
  background: #fff;
`;

const Params = styled.table`
  width: 100%;
  border-spacing: 0;
  table-layout: fixed;
  th, td { height: 24px; padding: 0 0 0 6px; text-align: left; font-weight: 400; white-space: nowrap; }
  th { border-right: 1px solid #e2e2e2; }
  th:first-child, td:first-child { width: 261px; }
  td { border: solid #bdbdbd; border-width: 0 1px 1px 0; }
  td + td, th + th { padding-left: 8px; }
  tr.current { outline: 1px dotted #000; outline-offset: -1px; }
  tr.current td { background: #12e6e2; }
  tr.current td:first-child { background: linear-gradient(90deg, #12e6e2 6px, #fff 6px); }
`;

const Canvas = styled.div`
  height: 100%;
  border: 2px solid #000;
  background: #fff;
  svg { display: block; width: 100%; height: 100%; }
`;

const Marker = styled.g`
  mix-blend-mode: multiply;
`;

const Footer = styled.footer`
  display: flex;
  align-items: center;
  justify-content: flex-end;
  gap: 10px;
  height: 40px;
  flex: none;
  padding-right: 7px;
`;

const Action = styled.button<{ $main?: boolean }>`
  width: 98px;
  height: 26px;
  padding: 0;
  border: 1px solid ${p => (p.$main ? '#0067c0' : '#cfcfcf')};
  border-radius: 4px;
  background: #fdfdfd;
  font: 13px ${SANS};
  color: #111;
`;

/* ---------- data ---------- */

const tabs: [string, number][] = [
  ['Betonarme', 90], ['Çelik', 62], ['Birleşim', 74], ['Objeler', 78], ['Değiştir', 72], ['Araçlar', 76],
  ['Ayarlar', 70], ['Görüntü', 84], ['Analiz ve Tasarım', 134], ['Analiz ve Tasarım Görüntüleme', 224],
  ['Raporlar', 80], ['Çizimler', 80],
];

const tools = 'frame | scalePen dropper callout | compass poly | move moveCopy rotate swirl mirror ibeam explode | trim extend offset bars brk xbrk join fillet chamfer scaleRect wand | nodes book grid | image textA zigzag arc circle cloud tri wave plus21 qscale m2 angle mm2 | levels eye | corner panels | turn hatch | xy z p3 target'.split(' ');
const tools2 = 'ycol ystair ydome ypile yl ytag axes axesP axesQ curve bolt'.split(' ');
const side = 'sGrid sBeam sCol sRed sTab sDark sTab sPlan sMount sX sHill sDot sPile sBlue sBeam sMount sHill sX sGreen levels sNum'.split(' ');

const pages = ['Parametreler-2D Görüntü', '3D Görüntü', 'Konstrüksiyon', 'Alanlar', 'Statik', 'Görünüm', 'Birimler', 'Korkuluk', 'Yapı Bileşenleri'];

const params: [string, string][] = [
  ['ALAN 1 YÜKSEKLİĞİ', '50.01 cm'], ['ALAN 1 KALINLIĞI', '15 cm'], ['KORKULUK KALINLIĞI', '10 cm'],
  ['KORKULUK YÜKSEKLİĞİ', '100 cm'], ['ÇIKIŞ HATTI DAİRE ÇAPI', '0.05'], ['ÇIKIŞ HATTI OK UZUNLUĞU', '5 cm'],
  ['ALAN 2 YÜKSEKLİĞİ', '66.68 cm'], ['ALAN 2 KALINLIĞI', '15 cm'], ['ALAN 3 YÜKSEKLİĞİ', '33.34 cm'],
  ['ALAN 3 KALINLIĞI', '15 cm'], ['SAHANLIK 1 KALINLIĞI', '15 cm'], ['ALAN 4 YÜKSEKLİĞİ', '50.01 cm'],
  ['ALAN 4 KALINLIĞI', '15 cm'], ['ALAN 5 YÜKSEKLİĞİ', '66.68 cm'], ['ALAN 5 KALINLIĞI', '15 cm'],
];

/* ---------- drawings ---------- */

function PlanDrawing() {
  return (
    <Svg width="300" height="728" viewBox="0 162 300 728" fontFamily={SANS}>
      <path d="M0 164H300V194H0Z" fill="#0ff" />
      <path d="M0 194H300V704H0Z" fill="#e9f3f6" />
      <path d="M0 583H300V618H0ZM0 705H300V740H0Z" fill="#0ff" />
      <path d="M0 164.500H300M0 193.500H300M0 582.500H300M0 618.500H300M0 704.500H300M0 740.500H300" stroke="#000" />
      <path d="M0 767.500H300" stroke="#d0d0e2" />
      <g fill="none" stroke="#2a1608">
        <circle cx="7" cy="243" r="30" /><path d="M0 243.500H37" />
        <circle cx="7" cy="669" r="30" /><path d="M0 669.500H37" />
      </g>
      <g fontSize="20" textAnchor="end">
        <text x="26" y="240" fill="#0a10ff">D11</text><text x="31" y="262" fill="#f00">=12</text>
        <text x="26" y="664" fill="#0a10ff">D16</text><text x="31" y="687" fill="#f00">=12</text>
        <text x="40" y="563" fill="#222">20/40</text>
      </g>
      <g fontSize="28" fill="#f00" stroke="#f00" strokeWidth=".4">
        <text x="41" y="240">G=0.450</text><text x="41" y="269">Q=0.200</text>
        <text x="41" y="664">G=0.450</text><text x="41" y="693">Q=0.200</text>
      </g>
      <g fontSize="25" fill="#333"><text x="83" y="609">K118</text><text x="86" y="731">K119</text></g>
      <path d="M64.500 194V582M64.500 619V652M47 652.500H81M47 669.500H81M64.500 669V704" stroke="#0f870f" fill="none" />
      <path d="M64.500 194L68 204H61ZM64.500 582L68 571H61ZM64.500 619L68 629H61ZM64.500 704L68 693H61Z" fill="#0f870f" />
      <path d="M0 387.500H300M0 661.500H300" stroke="#0f870f" strokeWidth="3" />
      <path d="M0 465.500H16M0 678.500H300" stroke="#26329c" />
    </Svg>
  );
}

const feet: [number, number][] = [[165, 352], [260, 354], [358, 356], [447, 360], [523, 361], [638, 363], [890, 370], [970, 372], [1125, 345], [1185, 360], [1090, 333], [335, 314], [470, 314], [115, 350], [95, 308], [575, 316]];

function ModelDrawing() {
  return (
    <Svg viewBox="60 -1098 1170 2151" preserveAspectRatio="xMaxYMax meet">
      <path d="M60 255L1230 260V330H60Z" fill="#dcdbe8" />
      <path d="M60 325L1230 328V370H60Z" fill="#f4f4fa" />
      <path d="M60 812L1230 956M60 665L1230 774M60 578L1230 664M60 520L1230 598M60 480L1230 541M60 447L1230 500M60 425L1230 470M60 390L1230 430M437 1053L620 450L650 330M1165 1053L820 455L750 330M60 757L410 440L520 340M60 533L250 430L400 340M1230 598L1000 460L870 350M1230 490L1060 410L940 340M1230 410L980 330" stroke="#dadae8" strokeWidth="3" fill="none" />
      <path d="M905 283L1230 362" stroke="#777" strokeWidth="2" strokeDasharray="3 6" />
      <path d="M905 325L1230 330" stroke="#999" strokeWidth="3" />
      <path d="M60 322L1090 335M60 335L1130 347M60 348L1185 360M60 348L340 312M165 352L330 314M260 354L470 315M358 356L480 320M447 360L500 330M523 361L575 318M645 330L638 362M850 340L890 368M905 345L970 370M155 414L975 445M430 372L985 384L1130 452L975 443" stroke="#f22020" strokeWidth="3.500" fill="none" />
      <path d="M210 366L425 374L400 389L190 381Z" fill="#0a70f2" />
      <path d="M890 378L985 455M860 440L1230 452M60 408L155 418M440 372L620 378" stroke="#5f96dc" strokeWidth="3" fill="none" />
      <path d="M60 355L200 366L430 368L990 382L1045 412M155 424L1230 467M165 420L240 396L700 405L1140 416L1230 457M400 388L435 368M425 433L455 404M435 433L467 404M706 403L713 445M717 403L721 445M955 410L1020 458M975 410L1035 460M60 373L190 388M60 388L130 380L190 368M60 410L120 400L230 398M60 362L160 372L60 384" stroke="#111" strokeWidth="5" fill="none" />
      <path d="M200 392L280 388M60 397L130 388M380 392L480 393M950 410H1040" stroke="#d8a010" strokeWidth="4" strokeDasharray="9 4" />
      <ellipse cx="620" cy="398" rx="38" ry="4" fill="none" stroke="#e01010" strokeWidth="5" />
      {feet.map(([x, y]) => <path key={x} d={`M${x - 11} ${y + 2}L${x + 11} ${y - 2}`} stroke="#ff8614" strokeWidth="6" />)}
      <path d="M400 242L442 230L495 228V270L452 274L426 290L417 325L400 327Z" fill="#b64aff" />
      <path d="M408 275L412 245M422 270L426 240M436 266V238M448 262L444 236" stroke="#fff" strokeWidth="5" />
      <path d="M433 174L493 190V197H433Z" fill="#e3c0ff" />
      <path d="M433 176L493 191M438 194V180M450 194V182M462 195V185M474 196V188M486 196V190" stroke="#b64aff" strokeWidth="4" />
      <g fill="#777773" stroke="#1c1c1c" strokeWidth="3">
        <path d="M167 226H180V318H169Z" fill="#555" />
        <path d="M213 226H268V325L215 329ZM495 226H522V334H497ZM632 226H660L666 325H636ZM800 226H855L868 340H807Z" />
        <path d="M268 226H303V320L270 326Z" fill="#464646" />
        <path d="M355 226H364V325H358Z" fill="#444" /><path d="M540 226H560L563 335H545Z" fill="#555" />
        <path d="M60 200L370 197L878 196V226H60Z" fill="#888884" />
        <path d="M180 201H208L214 336H178ZM362 201H371V226H395L399 342H362ZM520 226H541L546 344H522ZM855 226H880L887 350H865Z" />
        <path d="M880 207L900 209L908 340H887Z" fill="#5f5f5d" />
        <path d="M533 197V226" />
        <path d="M850 193H990V205L880 209Z" fill="#3f3f52" />
      </g>
      <path d="M107 536L135 537L138 541L108 540ZM407 554L435 556L440 560L410 559ZM625 569H645L647 577H624ZM994 592L1018 594L1023 602L998 600ZM614 616H636L639 626L616 625ZM385 602L487 611V615L386 607ZM967 647L1075 656V659L968 652ZM155 656L196 658L192 664L152 662ZM428 674L453 676L448 689L422 687ZM1020 727L1050 728L1062 744L1030 743Z" stroke="#8c1414" strokeWidth="3.500" fill="none" />
    </Svg>
  );
}

const numbers: [string, number, number][] = [
  ['6', 909, 284], ['7', 984, 284], ['5', 878, 336], ['4', 877, 425], ['3', 877, 464], ['2', 877, 503], ['1', 877, 542],
  ['1', 1278, 439], ['2', 1278, 478], ['3', 1278, 517], ['4', 1278, 556], ['5', 1278, 637],
  ['6', 1257, 697], ['7', 1176, 697], ['8', 1096, 697], ['9', 1055, 697],
];

function StairDrawing() {
  return (
    <svg viewBox="812 235 526 504" fontFamily={SANS}>
      <path d="M892 235V739M1033 235V739M1173 235V739M1313 235V739M812 270H1338M812 411H1338M812 551H1338M812 691H1338" stroke="#efefef" strokeWidth="2" />
      <g fill="none" stroke="#ababab">
        <path d="M1038.500 242.500H842.500V725.500H1313.500V405.500M1038.500 249.500H849.500V718.500H1306.500V411M1038.500 263.500H863.500V704.500H1292.500V411M1038.500 242V411.500H1010.500V562.500H842.500M1038.500 390.500H996.500V404.500H1038.500" />
        <path d="M842.500 439.500H1010.500M842.500 441.500H1010.500M842.500 444.500H1010.500M842.500 478.500H876M977 478.500H1010M842.500 481.500H1010.500M842.500 484.500H1010.500M842.500 517.500H876M977 517.500H1010M842.500 520.500H1010.500M842.500 523.500H1010.500M842.500 556.500H1145.500M842.500 559.500H1010.500M989.500 439V556M1003.500 439V556" />
        <path d="M1313.500 405.500H1145.500V556.500M1145.500 408.500H1313.500M1145.500 411.500H1313.500M1145.500 444.500H1313.500M1145.500 447.500H1313.500M1145.500 450.500H1179M1280 450.500H1313M1145.500 484.500H1313.500M1145.500 486.500H1313.500M1145.500 489.500H1179M1280 489.500H1313M1145.500 523.500H1313.500M1145.500 526.500H1313.500M1145.500 528.500H1313.500M1152.500 411V563.500H1038.500M1166.500 411V577.500H1038.500M1038.500 556V725" />
        <path d="M1078.500 556V590M1078.500 691V725M1080.500 556V725M1083.500 556V725M1117.500 556V725M1120.500 556V725M1122.500 556V725" />
        <g strokeDasharray="4 1" stroke="#a0a0a0">
          <path d="M1135 556L1218 725M1138 556L1221 725M1132 556L1148 590M1198 691L1215 725M1145 548L1313 717M1145 552L1313 721M1145 556L1179 590M1280 691L1313 725M1145 536L1313 619M1145 539L1313 623M1145 542L1179 559M1280 610L1313 627" />
          <path d="M842 336L1010 428M842 339L1010 431M842 334L876 352M977 407L1010 425M851 242L1010 419M855 242L1010 414M859 242L889 277M981 376L1008 411M942 242L1018 411M944 242L1021 411M948 242L963 275M1010 378L1025 411" />
        </g>
      </g>
      <g fill="#8c8c8c" fontSize="11">
        <text transform="rotate(-90 929 418)" x="929" y="418">4 RIHT16.7/37.5</text>
        <text transform="rotate(-90 929 545)" x="929" y="545">3 RIHT16.7/28.0</text>
        <text transform="rotate(-90 1218 502)" x="1218" y="502">3 RIHT16.7/28.0</text>
        <text transform="rotate(-90 1218 631)" x="1218" y="631">4 RIHT16.7/40.0</text>
        <text x="1029" y="629">5 RIHT16.7/28.0</text>
      </g>
      <g fill="none" stroke="#484848">
        <path d="M981 326.500H940.500V641.500H1229.500V405M975 323L981 326.500L975 330" />
        <circle cx="940.500" cy="562.500" r="7" /><circle cx="1229.500" cy="405.500" r="7" />
      </g>
      <g fill="#111" fontSize="14" textAnchor="middle">
        {numbers.map(([t, x, y]) => <text key={`${t}${x}${y}`} x={x} y={y}>{t}</text>)}
      </g>
      <Marker fill="#ffe600" fillRule="evenodd">
        <path transform="translate(790 200) scale(.33333)" d="M728 198H745L757 210L810 215L855 230V275H840L795 257Q812 275 813 300Q818 360 803 415Q790 455 745 495Q715 530 685 543Q660 552 600 550Q540 552 480 520Q440 500 425 488Q403 455 401 420V355Q415 315 440 290Q465 262 490 250Q520 236 550 232L620 222L680 215L728 210ZM740 257L690 260L600 270Q570 273 530 287Q480 310 445 345L418 375Q414 400 420 425Q430 445 440 452Q470 478 500 487Q560 508 620 508Q690 504 730 475Q760 445 775 410Q790 370 800 330Q798 315 785 305Q755 280 740 257Z" />
        <path transform="translate(1060 200) scale(.33333)" d="M118 171H132Q138 230 134 290Q131 315 121 340L103 385L99 410H72V365L86 363V335Q110 290 112 270Q118 252 118 230ZM50 430Q56 423 62 423H80L82 440L87 460L84 507H58L42 502V450Z" />
      </Marker>
      <path fill="none" stroke="#e81c1c" strokeWidth="5" d="M961 272L978 315M914 305L990 380M1034 274L1037 374M882 355L935 385M884 441L946 444M904 482L967 485M939 519L987 521M884 561L969 565M1166 408H1192M1172 443H1193M1166 481L1196 487M1175 523L1204 524M1188 557L1218 575M1182 585L1200 606M1158 594L1168 627M1118 601L1121 632M1081 597L1080 635M1036 600L1033 641" />
    </svg>
  );
}

/* ---------- page ---------- */

export default function App() {
  return (
    <Shell>
      <Global />
      <TabBar>
        {tabs.map(([name, w], i) => <Tab key={name} $w={w} $active={i === 0}>{name}</Tab>)}
        <Search>
          <input type="search" aria-label="Komut ara" placeholder="Herhangi bir komut ara..." />
          <Icon name="lens" size={16} />
          <Arrow $small />
        </Search>
        <QuickBar>
          <Icon name="layers" /><Icon name="layers2" />
          <StyleBox>
            <StyleSelect aria-label="Stil" defaultValue="Standart"><option>Standart</option></StyleSelect>
            <Icon name="styles" />
            <Arrow $small />
          </StyleBox>
          <ViewButton>Görünüm<Arrow $small /></ViewButton>
          <Icon name="people" /><Icon name="help" />
        </QuickBar>
      </TabBar>

      <Ribbon>
        <Group $w={135} $first>
          <GroupBody>
            <BigButton w={50} icon="Kat" label="Kat" second="listesi" />
            <Stack $w={26}>
              <Small aria-label="Kat"><Icon name="floors" /></Small>
              <Small aria-label="Kot"><Icon name="storey" /></Small>
              <RigidCheck><input type="checkbox" defaultChecked />Yarı Rijit</RigidCheck>
            </Stack>
          </GroupBody>
          <Caption $left>Proje Ayarları</Caption>
        </Group>
        <Group $w={87}>
          <GroupBody>
            <BigButton w={54} icon="Aks" label="Aks" />
            <Smalls w={22} names={['arcAxis', 'arcAxis2', 'dashLine']} />
          </GroupBody>
          <Caption>Aks</Caption>
        </Group>
        <Group $w={87}>
          <GroupBody>
            <BigButton w={54} icon="Duvar" label="Duvar" />
            <Smalls w={22} names={['wallCut', 'doorArc', 'pipe']} />
          </GroupBody>
          <Caption>Duvar</Caption>
        </Group>
        <Group $w={514}>
          <GroupBody>
            <BigButton w={54} icon="Kolon" label="Kolon" />
            <Smalls w={22} names={['round', 'lshape', 'plug']} />
            <Divider />
            <BigButton w={48} icon="Kiris" label="Kiriş" />
            <Smalls w={26} names={['beamL', 'pipe', 'arcBeam']} />
            <Divider />
            <BigButton w={44} icon="Perde" label="Perde" />
            <Divider />
            <BigButton w={50} icon="Doseme" label="Döşeme" />
            <Smalls w={30} names={['ycolumn', 'vArrow', 'yellowPlan']} />
            <Smalls w={30} names={['lines', 'mesh', 'steps']} />
            <Smalls w={30} names={['slabHole', 'load', 'load2']} />
            <BigButton w={56} icon="DKenar" label="Döşeme" second="Kenarı" />
            <Divider />
            <BigButton w={58} icon="Merdiven" label="Merdiven" />
          </GroupBody>
          <Caption>Betonarme</Caption>
        </Group>
        <Group $w={286}>
          <GroupBody>
            <BigButton w={58} icon="Surekli" label="Sürekli" second="Temel" />
            <Smalls w={24} names={['footing', 'piles', 'foot2']} />
            <Stack $w={14}>
              <Small aria-label="Tekil temel"><Arrow $small /></Small>
              <Small aria-label="Kazık"><Arrow $small /></Small>
              <Small aria-label="Bağ"><Arrow $small /></Small>
            </Stack>
            <Divider />
            <Smalls w={20} names={['retain', 'retain2']} />
            <Divider />
            <BigButton w={46} icon="Radye" label="Radye" />
            <Smalls w={28} names={['ycolumn', 'vArrow', 'yellowPlan']} />
            <BigButton w={64} icon="RKenar" label="Radye" second="Kenarı" />
          </GroupBody>
          <Caption>Temel - Zemin</Caption>
        </Group>
        <Group $w={90}>
          <GroupBody><BigButton w={86} icon="Iskele" label="İskele" second="Makrosu" /></GroupBody>
          <Caption>İskele Ayarları</Caption>
        </Group>
        <Group $w={128}>
          <GroupBody>
            <BigButton w={76} icon="Tas" label="Betonarme" />
            <BigButton w={44} icon="TasC" label="Çelik" />
          </GroupBody>
          <Caption>Tasarım</Caption>
        </Group>
        <Group $w={217}>
          <GroupBody>
            <BigButton w={58} icon="Secmeli" label="Seçmeli" second="Raporlar" arrow={false} />
            <Smalls w={20} names={['docCol', 'docCol2', 'doc']} />
            <Divider />
            <BigButton w={68} icon="RapB" label="Betonarme" />
            <BigButton w={52} icon="RapC" label="Çelik" />
          </GroupBody>
          <Caption>Raporlar</Caption>
        </Group>
        <Group $w={65} $plain>
          <GroupBody><BigButton w={63} icon="Led" label="Çizim" second="Oluştur" /></GroupBody>
        </Group>
        <Group $w={110} $plain>
          <GroupBody><BigButton w={108} icon="Led" label="Analiz ve Tasarım" second="Görüntüleme" /></GroupBody>
        </Group>
        <Group $w={58}>
          <GroupBody><BigButton w={56} icon="Son" label="Ayar" second="Tasarım" arrow={false} /></GroupBody>
          <Caption>Ayar</Caption>
        </Group>
      </Ribbon>

      <ToolRow>
        <ToolStrip>
          {tools.map((t, i) => (t === '|' ? <ToolGap key={i} /> : <Tool key={i} $first={i === 0} aria-label={t}><Icon name={t} /></Tool>))}
        </ToolStrip>
        <MoreTools aria-label="Diğer araçlar"><Arrow $small /></MoreTools>
        <ToolStrip $grow>
          <Grip />
          {tools2.map(t => <Tool key={t} aria-label={t}><Icon name={t} /></Tool>)}
        </ToolStrip>
      </ToolRow>

      <Workspace>
        <Plan>
          <PlanDrawing />
          <CoordBox>
            <h2>Koordinat Kutusu</h2>
            {[['X', '1612.91 cm'], ['Y', '447.45 cm'], ['Z', '600 cm']].map(([axis, v]) => (
              <CoordRow key={axis}>
                <input type="checkbox" id={`lock${axis}`} />
                <label htmlFor={`lock${axis}`}>{axis}</label>
                <input type="text" aria-label={axis} defaultValue={v} readOnly={axis === 'Z'} />
              </CoordRow>
            ))}
          </CoordBox>
        </Plan>
        <View3D>
          <ModelDrawing />
          <ViewButtons>
            <button aria-label="Filtre"><Svg width="16" height="14" viewBox="0 0 16 14"><path d="M1 1H15L9 8V13H7V8Z" fill="#eee" stroke="#222" /></Svg></button>
            <button aria-label="Normal"><Svg width="16" height="14" viewBox="0 0 16 14"><path d="M3 13V1L13 13V1" fill="none" stroke="#222" strokeWidth="1.500" /></Svg></button>
            <button aria-label="Perspektif"><Svg width="16" height="14" viewBox="0 0 16 14"><path d="M2 13L8 1L14 13" fill="none" stroke="#222" strokeWidth="1.500" /></Svg></button>
          </ViewButtons>
        </View3D>
        <SideBar>
          <SideTools>{side.map((s, i) => <Icon key={i} name={s} />)}</SideTools>
        </SideBar>
      </Workspace>
      <StatusBar>r</StatusBar>

      <Dialog role="dialog" aria-labelledby="dialog-title">
        <TitleBar>
          <h1 id="dialog-title">Merdiven Edit</h1>
          <button aria-label="Kapat"><Svg width="13" height="13" viewBox="0 0 13 13"><path d="M1 1L12 12M12 1L1 12" stroke="#111" strokeWidth="1.200" /></Svg></button>
        </TitleBar>
        <DialogBody>
          <Pages>
            {pages.map((p, i) => <li key={p}><PageButton $on={i === 0}>{p}</PageButton></li>)}
          </Pages>
          <Page>
            <Box $w={408} $pad="8px 13px 7px">
              <legend>Parametreler :</legend>
              <TableBox>
                <Params>
                  <thead><tr><th>Parametre</th><th>Değer</th></tr></thead>
                  <tbody>
                    {params.map(([name, v], i) => (
                      <tr key={name} className={i === 8 ? 'current' : undefined}><td>{name}</td><td>{v}</td></tr>
                    ))}
                  </tbody>
                </Params>
              </TableBox>
            </Box>
            <Box $pad="6px 13px 10px 11px">
              <legend>2D görüntü :</legend>
              <Canvas><StairDrawing /></Canvas>
            </Box>
          </Page>
        </DialogBody>
        <Footer>
          <Action $main>Tamam</Action>
          <Action>İptal</Action>
        </Footer>
      </Dialog>
    </Shell>
  );
}
